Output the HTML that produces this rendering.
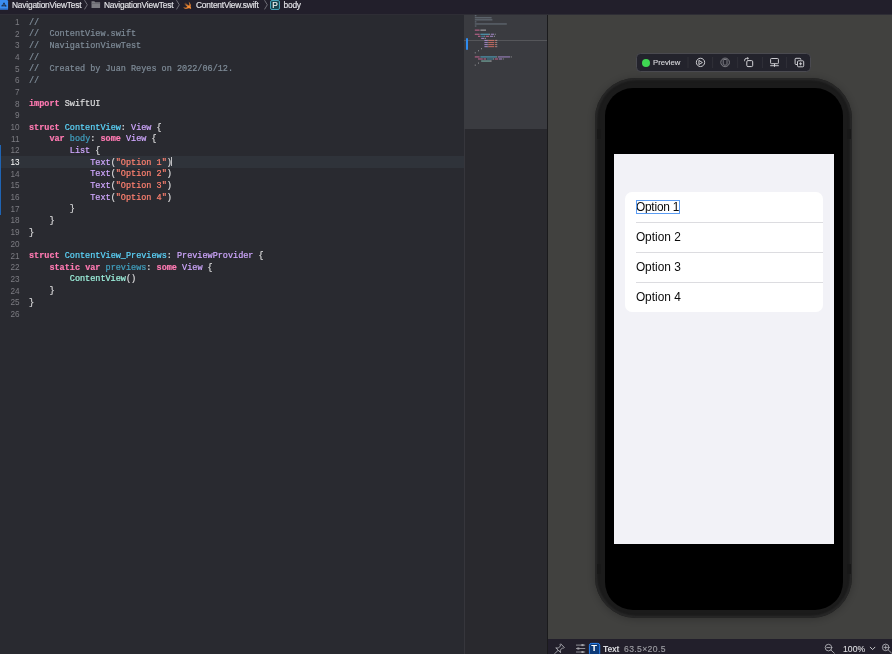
<!DOCTYPE html>
<html><head><meta charset="utf-8"><style>
*{margin:0;padding:0;box-sizing:border-box}
html,body{width:892px;height:654px;overflow:hidden;background:#292a30;font-family:"Liberation Sans",sans-serif}
body > *{will-change:transform}
.abs{position:absolute}
#crumb{position:absolute;left:0;top:0;width:892px;height:14.8px;background:#221f2b;border-bottom:1.1px solid #2e2d35}
#crumb span.t{position:absolute;top:0.2px;font-size:8.4px;letter-spacing:-0.2px;line-height:10px;color:#e4e4e8;-webkit-text-stroke:0.15px #e4e4e8;white-space:nowrap}
#editor{position:absolute;left:0;top:14px;width:464px;height:640px;background:#292a30}
.curline{position:absolute;left:0;width:464px;height:11.9px;background:#2f333a}
.ln{position:absolute;left:0;width:19.6px;text-align:right;font-family:"Liberation Sans",sans-serif;font-size:8.2px;line-height:11.67px;height:11.67px;color:#7c7c82}
.ln.cur{color:#ffffff}
.cl{position:absolute;left:28.7px;white-space:pre;-webkit-text-stroke:0.2px currentColor;font-family:"Liberation Mono",monospace;font-size:8.5px;line-height:11.67px;height:11.67px}
.caret{display:inline-block;width:1px;height:9px;background:#c0c0c4;vertical-align:middle;margin-top:-2px;margin-left:-0.4px}
#mm{position:absolute;left:464px;top:14px;width:83px;height:640px;background:#29292e;border-left:1px solid #36363c}
#mmvis{position:absolute;left:464px;top:14px;width:83px;height:115px;background:#3a3b40}
#mmi i{position:absolute;height:1.1px;opacity:0.6;display:block}
#divider{position:absolute;left:547px;top:14px;width:1px;height:640px;background:#1a1a1c}
#canvas{position:absolute;left:548px;top:14px;width:344px;height:625.2px;background:#41413f}
#status{position:absolute;left:548px;top:639.2px;width:344px;height:14.8px;background:#221f2b}

#crumb svg.chev{position:absolute;top:0;width:4px;height:10px}
#pbadge{position:absolute;left:269.9px;top:-0.4px;width:10.2px;height:10.3px;border-radius:2px;background:#17444f;border:1px solid #45a3b8;color:#f0f0f0;font-size:8.4px;line-height:9.2px;text-align:center;-webkit-text-stroke:0.15px #f0f0f0}
#phone{position:absolute;left:594.8px;top:78.4px;width:257.4px;height:540.2px;border-radius:41px;background:#1b1b1b;box-shadow:inset 0 0 1.5px 2.2px #272727, 0 1px 7px 1px rgba(0,0,0,0.2)}
#phoneinner{position:absolute;left:604.7px;top:88px;width:237.6px;height:521.5px;border-radius:28px;background:#000}
#screen{position:absolute;left:613.7px;top:154.1px;width:220px;height:390px;background:#f2f2f7;overflow:hidden}
#card{position:absolute;left:11.2px;top:37.6px;width:197.6px;height:120px;background:#fff;border-radius:7px;overflow:hidden}
.row{position:absolute;left:10.7px;top:0.9px;height:30.3px;line-height:30.3px;font-size:11.9px;color:#0a0a0a;white-space:nowrap}
.sep{position:absolute;left:11px;right:0;height:0.6px;background:#dcdce0}
#selbox{position:absolute;left:22px;top:46.1px;width:43.7px;height:13.7px;border:1px solid #5b9cf2}
#tb{position:absolute;left:636px;top:52.9px;width:174.5px;height:18.5px;background:#23232c;border:1px solid #4a4a50;border-radius:4.5px}
#gdot{position:absolute;left:641.8px;top:58.6px;width:8.2px;height:8.2px;border-radius:50%;background:#3fd752}
#pvtxt{position:absolute;left:652.7px;top:54.9px;line-height:16.6px;font-size:7.7px;-webkit-text-stroke:0.12px #d8d8dc;color:#d8d8dc;white-space:nowrap}
.tsep{position:absolute;top:3px;width:0.8px;height:11px;background:#34343b}
.ti{position:absolute}
#sttxt{position:absolute;left:603.4px;top:641.6px;line-height:15px;height:15px;font-size:8.6px;font-weight:bold;letter-spacing:-0.22px;color:#d8d8dc;white-space:nowrap}
#tbT{position:absolute;left:589.3px;top:640.4px;width:10.3px;text-align:center;line-height:15px;font-size:9.4px;font-weight:bold;color:#fff}
#stdim{position:absolute;left:623.9px;top:641.6px;line-height:15px;font-size:8.6px;letter-spacing:0.37px;color:#9c9ca2;-webkit-text-stroke:0.15px #9c9ca2;white-space:nowrap}
#zoomtxt{position:absolute;left:842.8px;top:641.6px;line-height:15px;font-size:8.6px;letter-spacing:0.08px;color:#dcdce0;-webkit-text-stroke:0.12px #dcdce0;white-space:nowrap}
.notch{position:absolute;width:3.6px;height:10px;background:#181818}
</style></head><body>

<div id="editor"></div>
<div class="curline" style="top:155.7px"></div>
<div style="position:absolute;left:0;top:144.5px;width:1.2px;height:69.5px;background:#1f64b4"></div>
<div class="ln" style="top:17.10px">1</div>
<div class="cl" style="top:17.70px"><span style="color:#7f8c98">//</span></div>
<div class="ln" style="top:28.77px">2</div>
<div class="cl" style="top:29.37px"><span style="color:#7f8c98">//  ContentView.swift</span></div>
<div class="ln" style="top:40.44px">3</div>
<div class="cl" style="top:41.04px"><span style="color:#7f8c98">//  NavigationViewTest</span></div>
<div class="ln" style="top:52.11px">4</div>
<div class="cl" style="top:52.71px"><span style="color:#7f8c98">//</span></div>
<div class="ln" style="top:63.78px">5</div>
<div class="cl" style="top:64.38px"><span style="color:#7f8c98">//  Created by Juan Reyes on 2022/06/12.</span></div>
<div class="ln" style="top:75.45px">6</div>
<div class="cl" style="top:76.05px"><span style="color:#7f8c98">//</span></div>
<div class="ln" style="top:87.12px">7</div>
<div class="cl" style="top:87.72px"></div>
<div class="ln" style="top:98.79px">8</div>
<div class="cl" style="top:99.39px"><span style="color:#ff7ab2;font-weight:bold">import</span><span style="color:#dfdfe0"> SwiftUI</span></div>
<div class="ln" style="top:110.46px">9</div>
<div class="cl" style="top:111.06px"></div>
<div class="ln" style="top:122.13px">10</div>
<div class="cl" style="top:122.73px"><span style="color:#ff7ab2;font-weight:bold">struct</span><span style="color:#dfdfe0"> </span><span style="color:#5dd8ff">ContentView</span><span style="color:#dfdfe0">: </span><span style="color:#d0a8ff">View</span><span style="color:#dfdfe0"> {</span></div>
<div class="ln" style="top:133.80px">11</div>
<div class="cl" style="top:134.40px"><span style="color:#dfdfe0">    </span><span style="color:#ff7ab2;font-weight:bold">var</span><span style="color:#dfdfe0"> </span><span style="color:#41a1c0">body</span><span style="color:#dfdfe0">: </span><span style="color:#ff7ab2;font-weight:bold">some</span><span style="color:#dfdfe0"> </span><span style="color:#d0a8ff">View</span><span style="color:#dfdfe0"> {</span></div>
<div class="ln" style="top:145.47px">12</div>
<div class="cl" style="top:146.07px"><span style="color:#dfdfe0">        </span><span style="color:#d0a8ff">List</span><span style="color:#dfdfe0"> {</span></div>
<div class="ln cur" style="top:157.14px">13</div>
<div class="cl" style="top:157.74px"><span style="color:#dfdfe0">            </span><span style="color:#d0a8ff">Text</span><span style="color:#dfdfe0">(</span><span style="color:#ff8170">&quot;Option 1&quot;</span><span style="color:#dfdfe0">)</span><span class="caret"></span></div>
<div class="ln" style="top:168.81px">14</div>
<div class="cl" style="top:169.41px"><span style="color:#dfdfe0">            </span><span style="color:#d0a8ff">Text</span><span style="color:#dfdfe0">(</span><span style="color:#ff8170">&quot;Option 2&quot;</span><span style="color:#dfdfe0">)</span></div>
<div class="ln" style="top:180.48px">15</div>
<div class="cl" style="top:181.08px"><span style="color:#dfdfe0">            </span><span style="color:#d0a8ff">Text</span><span style="color:#dfdfe0">(</span><span style="color:#ff8170">&quot;Option 3&quot;</span><span style="color:#dfdfe0">)</span></div>
<div class="ln" style="top:192.15px">16</div>
<div class="cl" style="top:192.75px"><span style="color:#dfdfe0">            </span><span style="color:#d0a8ff">Text</span><span style="color:#dfdfe0">(</span><span style="color:#ff8170">&quot;Option 4&quot;</span><span style="color:#dfdfe0">)</span></div>
<div class="ln" style="top:203.82px">17</div>
<div class="cl" style="top:204.42px"><span style="color:#dfdfe0">        }</span></div>
<div class="ln" style="top:215.49px">18</div>
<div class="cl" style="top:216.09px"><span style="color:#dfdfe0">    }</span></div>
<div class="ln" style="top:227.16px">19</div>
<div class="cl" style="top:227.76px"><span style="color:#dfdfe0">}</span></div>
<div class="ln" style="top:238.83px">20</div>
<div class="cl" style="top:239.43px"></div>
<div class="ln" style="top:250.50px">21</div>
<div class="cl" style="top:251.10px"><span style="color:#ff7ab2;font-weight:bold">struct</span><span style="color:#dfdfe0"> </span><span style="color:#5dd8ff">ContentView_Previews</span><span style="color:#dfdfe0">: </span><span style="color:#d0a8ff">PreviewProvider</span><span style="color:#dfdfe0"> {</span></div>
<div class="ln" style="top:262.17px">22</div>
<div class="cl" style="top:262.77px"><span style="color:#dfdfe0">    </span><span style="color:#ff7ab2;font-weight:bold">static</span><span style="color:#dfdfe0"> </span><span style="color:#ff7ab2;font-weight:bold">var</span><span style="color:#dfdfe0"> </span><span style="color:#41a1c0">previews</span><span style="color:#dfdfe0">: </span><span style="color:#ff7ab2;font-weight:bold">some</span><span style="color:#dfdfe0"> </span><span style="color:#d0a8ff">View</span><span style="color:#dfdfe0"> {</span></div>
<div class="ln" style="top:273.84px">23</div>
<div class="cl" style="top:274.44px"><span style="color:#dfdfe0">        </span><span style="color:#9ef1dd">ContentView</span><span style="color:#dfdfe0">()</span></div>
<div class="ln" style="top:285.51px">24</div>
<div class="cl" style="top:286.11px"><span style="color:#dfdfe0">    }</span></div>
<div class="ln" style="top:297.18px">25</div>
<div class="cl" style="top:297.78px"><span style="color:#dfdfe0">}</span></div>
<div class="ln" style="top:308.85px">26</div>
<div class="cl" style="top:309.45px"></div>
<div id="mm"></div>
<div id="mmvis"></div>
<div style="position:absolute;left:464px;top:40px;width:83px;height:1px;background:#55565a"></div>
<svg style="position:absolute;left:464px;top:14px;opacity:0.62" width="83" height="70" viewBox="464 14 83 70">
<rect x="474.80" y="15.15" width="1.60" height="1.15" fill="#7f8c98"/>
<rect x="474.80" y="17.21" width="16.80" height="1.15" fill="#7f8c98"/>
<rect x="474.80" y="19.27" width="17.60" height="1.15" fill="#7f8c98"/>
<rect x="474.80" y="21.33" width="1.60" height="1.15" fill="#7f8c98"/>
<rect x="474.80" y="23.39" width="32.00" height="1.15" fill="#7f8c98"/>
<rect x="474.80" y="25.45" width="1.60" height="1.15" fill="#7f8c98"/>
<rect x="474.80" y="29.57" width="4.80" height="1.15" fill="#ff7ab2"/>
<rect x="480.40" y="29.57" width="5.60" height="1.15" fill="#dfdfe0"/>
<rect x="474.80" y="33.69" width="4.80" height="1.15" fill="#ff7ab2"/>
<rect x="480.40" y="33.69" width="8.80" height="1.15" fill="#5dd8ff"/>
<rect x="489.20" y="33.69" width="0.80" height="1.15" fill="#dfdfe0"/>
<rect x="490.80" y="33.69" width="3.20" height="1.15" fill="#d0a8ff"/>
<rect x="494.80" y="33.69" width="0.80" height="1.15" fill="#dfdfe0"/>
<rect x="478.00" y="35.75" width="2.40" height="1.15" fill="#ff7ab2"/>
<rect x="481.20" y="35.75" width="3.20" height="1.15" fill="#41a1c0"/>
<rect x="484.40" y="35.75" width="0.80" height="1.15" fill="#dfdfe0"/>
<rect x="486.00" y="35.75" width="3.20" height="1.15" fill="#ff7ab2"/>
<rect x="490.00" y="35.75" width="3.20" height="1.15" fill="#d0a8ff"/>
<rect x="494.00" y="35.75" width="0.80" height="1.15" fill="#dfdfe0"/>
<rect x="481.20" y="37.81" width="3.20" height="1.15" fill="#d0a8ff"/>
<rect x="485.20" y="37.81" width="0.80" height="1.15" fill="#dfdfe0"/>
<rect x="484.40" y="39.87" width="3.20" height="1.15" fill="#d0a8ff"/>
<rect x="487.60" y="39.87" width="0.80" height="1.15" fill="#dfdfe0"/>
<rect x="488.40" y="39.87" width="5.60" height="1.15" fill="#ff8170"/>
<rect x="494.80" y="39.87" width="1.60" height="1.15" fill="#ff8170"/>
<rect x="496.40" y="39.87" width="0.80" height="1.15" fill="#dfdfe0"/>
<rect x="484.40" y="41.93" width="3.20" height="1.15" fill="#d0a8ff"/>
<rect x="487.60" y="41.93" width="0.80" height="1.15" fill="#dfdfe0"/>
<rect x="488.40" y="41.93" width="5.60" height="1.15" fill="#ff8170"/>
<rect x="494.80" y="41.93" width="1.60" height="1.15" fill="#ff8170"/>
<rect x="496.40" y="41.93" width="0.80" height="1.15" fill="#dfdfe0"/>
<rect x="484.40" y="43.99" width="3.20" height="1.15" fill="#d0a8ff"/>
<rect x="487.60" y="43.99" width="0.80" height="1.15" fill="#dfdfe0"/>
<rect x="488.40" y="43.99" width="5.60" height="1.15" fill="#ff8170"/>
<rect x="494.80" y="43.99" width="1.60" height="1.15" fill="#ff8170"/>
<rect x="496.40" y="43.99" width="0.80" height="1.15" fill="#dfdfe0"/>
<rect x="484.40" y="46.05" width="3.20" height="1.15" fill="#d0a8ff"/>
<rect x="487.60" y="46.05" width="0.80" height="1.15" fill="#dfdfe0"/>
<rect x="488.40" y="46.05" width="5.60" height="1.15" fill="#ff8170"/>
<rect x="494.80" y="46.05" width="1.60" height="1.15" fill="#ff8170"/>
<rect x="496.40" y="46.05" width="0.80" height="1.15" fill="#dfdfe0"/>
<rect x="481.20" y="48.11" width="0.80" height="1.15" fill="#dfdfe0"/>
<rect x="478.00" y="50.17" width="0.80" height="1.15" fill="#dfdfe0"/>
<rect x="474.80" y="52.23" width="0.80" height="1.15" fill="#dfdfe0"/>
<rect x="474.80" y="56.35" width="4.80" height="1.15" fill="#ff7ab2"/>
<rect x="480.40" y="56.35" width="16.00" height="1.15" fill="#5dd8ff"/>
<rect x="496.40" y="56.35" width="0.80" height="1.15" fill="#dfdfe0"/>
<rect x="498.00" y="56.35" width="12.00" height="1.15" fill="#d0a8ff"/>
<rect x="510.80" y="56.35" width="0.80" height="1.15" fill="#dfdfe0"/>
<rect x="478.00" y="58.41" width="4.80" height="1.15" fill="#ff7ab2"/>
<rect x="483.60" y="58.41" width="2.40" height="1.15" fill="#ff7ab2"/>
<rect x="486.80" y="58.41" width="6.40" height="1.15" fill="#41a1c0"/>
<rect x="493.20" y="58.41" width="0.80" height="1.15" fill="#dfdfe0"/>
<rect x="494.80" y="58.41" width="3.20" height="1.15" fill="#ff7ab2"/>
<rect x="498.80" y="58.41" width="3.20" height="1.15" fill="#d0a8ff"/>
<rect x="502.80" y="58.41" width="0.80" height="1.15" fill="#dfdfe0"/>
<rect x="481.20" y="60.47" width="8.80" height="1.15" fill="#9ef1dd"/>
<rect x="490.00" y="60.47" width="1.60" height="1.15" fill="#dfdfe0"/>
<rect x="478.00" y="62.53" width="0.80" height="1.15" fill="#dfdfe0"/>
<rect x="474.80" y="64.59" width="0.80" height="1.15" fill="#dfdfe0"/>
</svg>
<div style="position:absolute;left:466px;top:38px;width:2px;height:11.5px;background:#2f8cf0;border-radius:1px"></div>
<div id="divider"></div>
<div id="canvas"></div>
<div id="phone"></div>
<div id="phoneinner"></div>
<div class="notch" style="left:596.6px;top:129px"></div><div class="notch" style="left:596.6px;top:563.5px"></div>
<div class="notch" style="left:846.8px;top:129px"></div><div class="notch" style="left:846.8px;top:563.5px"></div>
<div id="screen">
  <div id="card">
    <div class="row" style="letter-spacing:-0.2px">Option 1</div><div class="sep" style="top:30.3px"></div>
    <div class="row" style="top:30.3px">Option 2</div><div class="sep" style="top:60.6px"></div>
    <div class="row" style="top:60.6px">Option 3</div><div class="sep" style="top:90.9px"></div>
    <div class="row" style="top:90.9px">Option 4</div>
  </div>
  <div id="selbox"></div>
</div>
<div id="tb"></div>
<div id="gdot"></div>
<span id="pvtxt">Preview</span>
<svg style="position:absolute;left:630px;top:48px" width="190" height="30" viewBox="630 48 190 30">
  <g stroke="#34343b" stroke-width="0.8"><path d="M688 57 V68 M712.6 57 V68 M737.7 57 V68 M762.4 57 V68 M786.4 57 V68"/></g>
  <g fill="none" stroke="#d4d4d8" stroke-width="0.95">
    <circle cx="700.5" cy="62.4" r="4.15"/>
    <path d="M698.9 60.4 L702.4 62.5 L698.9 64.6 Z" stroke-linejoin="round"/>
  </g>
  <g fill="none" stroke="#8e8e94" stroke-width="0.85">
    <circle cx="725.1" cy="62.4" r="4.3"/>
    <rect x="723.2" y="59.5" width="3.8" height="5.6" rx="0.7"/>
  </g>
  <g fill="none" stroke="#d4d4d8" stroke-width="1">
    <rect x="746.8" y="60.6" width="5.9" height="6" rx="1.2"/>
    <path d="M744.6 61.2 V60.4 Q744.6 58.3 746.8 58.3 H747.4"/>
  </g>
  <path d="M747.2 56.9 L749.1 58.3 L747.2 59.7 Z" fill="#d4d4d8"/>
  <g fill="none" stroke="#d4d4d8" stroke-width="0.95">
    <rect x="770.6" y="58.5" width="7.8" height="5.2" rx="0.8"/>
    <path d="M770.2 65.7 H778.8 M774.5 63.8 V66.8"/>
  </g>
  <g fill="none" stroke="#d4d4d8" stroke-width="0.95">
    <path d="M800.8 59.8 V59.2 Q800.8 58.3 799.9 58.3 H796 Q795.1 58.3 795.1 59.2 V63.6 Q795.1 64.5 796 64.5 H797"/>
    <rect x="797.5" y="60.8" width="6.2" height="6" rx="1"/>
    <path d="M800.6 62.3 V65.3 M799.1 63.8 H802.1"/>
  </g>
</svg>
<div id="status"></div>
<svg style="position:absolute;left:548px;top:639px" width="344" height="15" viewBox="548 639 344 15">
  <g transform="translate(558.1 650.3) rotate(45)" fill="none" stroke="#a8a8ae" stroke-width="0.9" stroke-linejoin="round" stroke-linecap="round">
    <path d="M-2.4 -6.4 H2.4 V-5.4 L1.4 -4.7 V-1.6 L3.4 -0.1 H-3.4 L-1.4 -1.6 V-4.7 L-2.4 -5.4 Z"/>
    <path d="M0 0 V4.6"/>
  </g>
  <g stroke="#a4a4aa" stroke-width="0.85">
    <path d="M576 645.1 H585.2 M576 648.5 H585.2 M576 652 H585.2"/>
  </g>
  <g fill="#a4a4aa">
    <rect x="581.4" y="644.1" width="2.2" height="2"/>
    <rect x="577.2" y="647.5" width="2.2" height="2"/>
    <rect x="581.4" y="651" width="2.2" height="2"/>
  </g>
  <rect x="589.4" y="643.4" width="10.3" height="12" rx="2" fill="#0c3a78" stroke="#2a84f5" stroke-width="1"/>
  <g fill="none" stroke="#b8b8be" stroke-width="0.85" stroke-linecap="round">
    <circle cx="828.5" cy="647.6" r="3.3"/>
    <path d="M826.8 647.6 H830.2 M830.9 650 L834.3 653.2"/>
    <circle cx="885.7" cy="647.4" r="3.3"/>
    <path d="M884 647.4 H887.4 M885.7 645.7 V649.1 M888.1 649.8 L891.5 653"/>
  </g>
  <path d="M870.3 647.2 L872.6 649.6 L874.9 647.2" fill="none" stroke="#d0d0d4" stroke-width="0.95" stroke-linecap="round"/>
</svg>
<span id="tbT">T</span>
<span id="sttxt">Text</span>
<span id="stdim">63.5×20.5</span>
<span id="zoomtxt">100%</span>
<div id="crumb">
  <svg style="position:absolute;left:0;top:0" width="9" height="10" viewBox="0 0 9 10"><rect x="-1" y="0" width="9.1" height="9.9" rx="1.3" fill="#3b8ef0"/><rect x="-1" y="8.6" width="9.1" height="1.3" rx="0.6" fill="#2a65b5"/><path d="M4 2.8 L2.3 6.2 M4 2.8 L5.8 6.6 M1.4 5.8 H6.4" stroke="#1d2f4a" stroke-width="1"/></svg>
  <span class="t" style="left:12px">NavigationViewTest</span>
  <svg class="chev" style="left:83.8px"><path d="M0.5 0.2 L3.3 4.8 L0.5 9.4" fill="none" stroke="#8a8a90" stroke-width="0.75"/></svg>
  <svg style="position:absolute;left:91px;top:1px" width="10" height="8" viewBox="0 0 10 8"><path d="M0.5 0.2 H3.4 L4.1 1.2 H9.1 V7 H0.5 Z" fill="#7d7d83"/><rect x="0.5" y="2.2" width="8.6" height="0.5" fill="#5c5c63"/></svg>
  <span class="t" style="left:104px">NavigationViewTest</span>
  <svg class="chev" style="left:176.3px"><path d="M0.5 0.2 L3.3 4.8 L0.5 9.4" fill="none" stroke="#8a8a90" stroke-width="0.75"/></svg>
  <svg style="position:absolute;left:183.3px;top:0.6px" width="9" height="9" viewBox="0 0 9 9"><path d="M5.4 0.6 C7.6 2.2 8.2 4.4 7.6 5.8 C8.1 6.6 8.3 7.5 8 8.1 C7.2 7.2 6 7 4.6 7.6 C3 8.3 1.2 7.6 0.3 6.2 C1.8 7 3.6 6.7 4.6 5.9 C3.2 4.8 1.9 3.5 1 2.2 C2.2 3.3 3.6 4.4 4.9 5.1 C3.6 3.9 2.6 2.7 1.9 1.5 C3.4 2.9 5.2 4.3 6.2 4.8 C6.7 3.4 6.4 2 5.4 0.6 Z" fill="#f78b33"/></svg>
  <span class="t" style="left:196px">ContentView.swift</span>
  <svg class="chev" style="left:263.5px"><path d="M0.5 0.2 L3.3 4.8 L0.5 9.4" fill="none" stroke="#8a8a90" stroke-width="0.75"/></svg>
  <div id="pbadge">P</div>
  <span class="t" style="left:283.5px">body</span>
</div>

</body></html>
